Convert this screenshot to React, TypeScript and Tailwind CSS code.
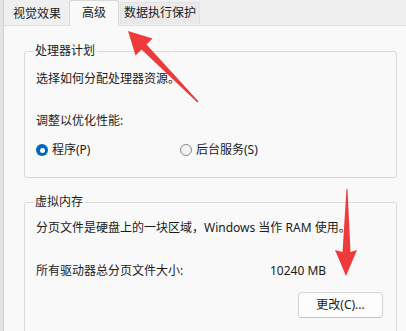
import React from 'react'

function Radio({ checked, label }: { checked?: boolean; label: string }) {
  return (
    <div className="flex items-center gap-[4px]">
      {checked ? (
        <span className="flex h-[12px] w-[12px] items-center justify-center rounded-full bg-[#0067c0]">
          <span className="h-[5px] w-[5px] rounded-full bg-white" />
        </span>
      ) : (
        <span className="h-[12px] w-[12px] rounded-full border border-[#8b8b8b] bg-[#f3f3f3]" />
      )}
      <span>{label}</span>
    </div>
  )
}

function Arrows() {
  return (
    <svg className="pointer-events-none absolute left-0 top-0" width="406" height="331" viewBox="0 0 406 331">
      {/* 指向“高级”标签 */}
      <polygon
        points="125,31 149.5,38.5 143.5,44.5 195.6,101.4 194.4,102.6 138.5,49.5 132.5,55.5"
        fill="#ee3a3a"
      />
      {/* 指向“更改”按钮 */}
      <polygon points="344.5,189 347.5,252 354,250 343,276 332,250 339.5,252 343.5,189" fill="#ee3a3a" />
    </svg>
  )
}

export default function App() {
  return (
    <div
      className="relative h-[331px] w-[406px] overflow-hidden border-l-[3px] border-[#e4e4e4] bg-[#f0f0f0] text-[12px] leading-[16px] text-[#1b1b1b]"
      style={{ fontFamily: '"Noto Sans", "Noto Sans CJK SC", sans-serif' }}
    >
      <div className="flex h-full flex-col border-l border-[#d0d0d0]">
        {/* 标签 */}
        <div className="flex h-[26px] items-end pl-[1px]">
          <div className="flex h-[23px] w-[64px] items-center justify-center">视觉效果</div>
          <div className="relative z-10 -mb-px flex h-[26px] w-[50px] items-center justify-center rounded-t-[3px] border-x border-t border-[#d8d8d8] bg-[#f9f9f9] pb-[2px]">
            高级
          </div>
          <div className="mb-[1px] ml-[1px] flex h-[22px] w-[80px] items-center justify-center rounded-t-[2px] border border-b-0 border-[#e2e2e2] bg-[#eaeaea] pb-[1px]">
            数据执行保护
          </div>
        </div>

        {/* 内容 */}
        <div className="flex-1 border-t border-[#e0e0e0] bg-[#f9f9f9] pl-[20px] pr-[9px] pt-[17px]">
          <fieldset className="h-[135px] rounded-[3px] border border-[#dadada] pl-[11px]">
            <legend className="ml-[-3px] px-[2px]">处理器计划</legend>
            <p className="mt-[12px]">选择如何分配处理器资源。</p>
            <p className="mt-[26px]">调整以优化性能:</p>
            <div className="mt-[13px] flex">
              <div className="w-[144px]">
                <Radio checked label="程序(P)" />
              </div>
              <Radio label="后台服务(S)" />
            </div>
          </fieldset>

          <fieldset className="mt-[16px] h-[160px] rounded-[3px] border border-[#dadada] pl-[11px]">
            <legend className="ml-[-3px] px-[2px]">虚拟内存</legend>
            <p className="mt-[10px]">分页文件是硬盘上的一块区域，Windows 当作 RAM 使用。</p>
            <div className="mt-[27px] flex">
              <span className="w-[234px]">所有驱动器总分页文件大小:</span>
              <span>10240 MB</span>
            </div>
            <div className="mt-[13px] flex justify-end pr-[13px]">
              <button className="flex h-[26px] w-[85px] items-center justify-center rounded-[4px] border border-[#d5d5d5] border-b-[#c2c2c2] bg-[#fdfdfd]">
                更改(C)...
              </button>
            </div>
          </fieldset>
        </div>
      </div>
      <Arrows />
    </div>
  )
}
